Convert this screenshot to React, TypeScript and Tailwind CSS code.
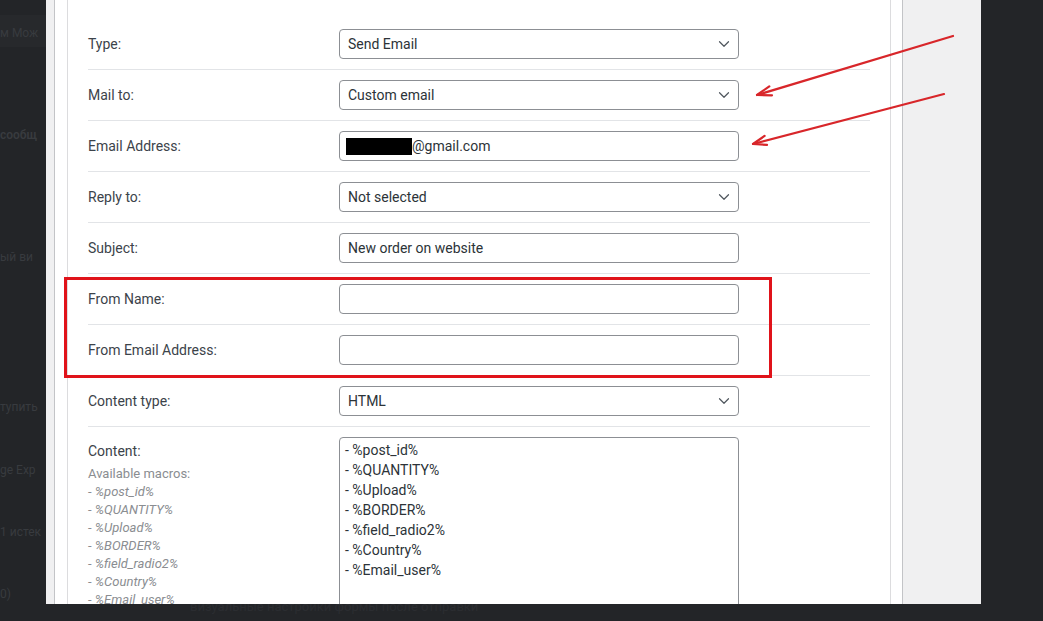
import { ChevronDown } from "lucide-react";

interface RowProps {
  label: string;
  children: React.ReactNode;
}

function Row({ label, children }: RowProps) {
  return (
    <div className="flex h-[51px] items-center border-b border-[#e2e4e7]">
      <div className="w-[251px] shrink-0 text-[14px] text-[#3c434a]">{label}</div>
      {children}
    </div>
  );
}

function Select({ value }: { value: string }) {
  return (
    <div className="flex h-[30px] w-[400px] items-center justify-between rounded-[4px] border border-[#8c8f94] bg-white pl-[8px] pr-[5px] text-[14px] text-[#2c3338]">
      <span>{value}</span>
      <ChevronDown size={18} strokeWidth={1.6} className="text-[#50575e]" />
    </div>
  );
}

function TextInput({ children }: { children?: React.ReactNode }) {
  return (
    <div className="flex h-[30px] w-[400px] items-center rounded-[4px] border border-[#8c8f94] bg-white px-[6px] text-[14px] text-[#2c3338]">
      {children}
    </div>
  );
}

const macros = [
  "%post_id%",
  "%QUANTITY%",
  "%Upload%",
  "%BORDER%",
  "%field_radio2%",
  "%Country%",
  "%Email_user%",
];

// fragments of the page that shows behind the modal
const ghost = [
  { text: "м Мож", mt: "mt-[8px]", bold: false },
  { text: "сообщ", mt: "mt-[78px]", bold: true },
  { text: "ый ви", mt: "mt-[102px]", bold: false },
  { text: "тупить", mt: "mt-[130px]", bold: false },
  { text: "ge Exp", mt: "mt-[43px]", bold: false },
  { text: "1 истек", mt: "mt-[42px]", bold: false },
  { text: "0)", mt: "mt-[42px]", bold: false },
];

export default function App() {
  return (
    <div className="relative h-[621px] w-[1043px] overflow-hidden bg-[#232528] font-['Roboto',sans-serif]">
      <div className="flex h-[604px]">
        <div className="flex w-[46px] shrink-0 flex-col overflow-hidden whitespace-nowrap text-[12px] text-[#383b3f]">
          <div className="mt-[15px] flex h-[35px] flex-col bg-[#27292c]">
            {ghost.slice(0, 1).map((g) => (
              <div key={g.text} className={`${g.mt} h-[20px] leading-[20px]`}>
                {g.text}
              </div>
            ))}
          </div>
          {ghost.slice(1).map((g) => (
            <div
              key={g.text}
              className={`${g.mt} h-[20px] leading-[20px] ${g.bold ? "font-semibold" : ""}`}
            >
              {g.text}
            </div>
          ))}
        </div>

        {/* modal */}
        <div className="flex w-[935px] shrink-0 bg-[#f0f0f1] pl-[8px]">
          <div className="w-[849px] shrink-0 overflow-hidden border-x border-[#c3c4c7] bg-white pl-[12px] pr-[11px]">
            <div className="h-full border-x border-[#dcdcde] px-[20px] pt-[19px]">
              <Row label="Type:">
                <Select value="Send Email" />
              </Row>
              <Row label="Mail to:">
                <Select value="Custom email" />
              </Row>
              <Row label="Email Address:">
                <TextInput>
                  <span className="h-[17px] w-[66px] bg-black" />
                  <span>@gmail.com</span>
                </TextInput>
              </Row>
              <Row label="Reply to:">
                <Select value="Not selected" />
              </Row>
              <Row label="Subject:">
                <TextInput>
                  <span className="pl-[2px]">New order on website</span>
                </TextInput>
              </Row>
              <Row label="From Name:">
                <TextInput />
              </Row>
              <Row label="From Email Address:">
                <TextInput />
              </Row>
              <Row label="Content type:">
                <Select value="HTML" />
              </Row>
              <div className="flex pt-[10px]">
                <div className="w-[251px] shrink-0 pt-[4px]">
                  <div className="text-[14px] leading-[20px] text-[#3c434a]">Content:</div>
                  <div className="mt-[4px] text-[13px] leading-[18px] text-[#8a8d91]">
                    Available macros:
                  </div>
                  {macros.map((m) => (
                    <div key={m} className="text-[13px] leading-[18px] text-[#8a8d91]">
                      - <span className="italic">{m}</span>
                    </div>
                  ))}
                </div>
                <div className="h-[200px] w-[400px] rounded-[4px] border border-[#8c8f94] px-[5px] pt-[2px] text-[14px] leading-[20px] text-[#2c3338]">
                  {macros.map((m) => (
                    <div key={m}>- {m}</div>
                  ))}
                </div>
              </div>
            </div>
          </div>
        </div>
        <div className="flex-1" />
      </div>

      {/* page behind, bottom strip */}
      <div className="h-[17px] overflow-hidden whitespace-nowrap pl-[190px] text-[13px] leading-[13px] text-[#2b2d31]">
        <div className="-mt-[4px]">визуальные настройки формы после отправки</div>
      </div>

      {/* annotations */}
      <div className="pointer-events-none absolute left-[64px] top-[277px] h-[101px] w-[708px] border-[3px] border-[#e0131a]" />
      <svg
        className="pointer-events-none absolute left-0 top-0"
        width="1043"
        height="621"
        viewBox="0 0 1043 621"
        fill="none"
        stroke="#d8262a"
        strokeWidth="2.2"
        strokeLinecap="round"
        strokeLinejoin="round"
      >
        <path d="M953 36 L757 95" />
        <path d="M772 95.3 L757 95 L769.3 86.4" />
        <path d="M944 94 L753 144" />
        <path d="M767 144.9 L753 144 L764.6 135.9" />
      </svg>
    </div>
  );
}
